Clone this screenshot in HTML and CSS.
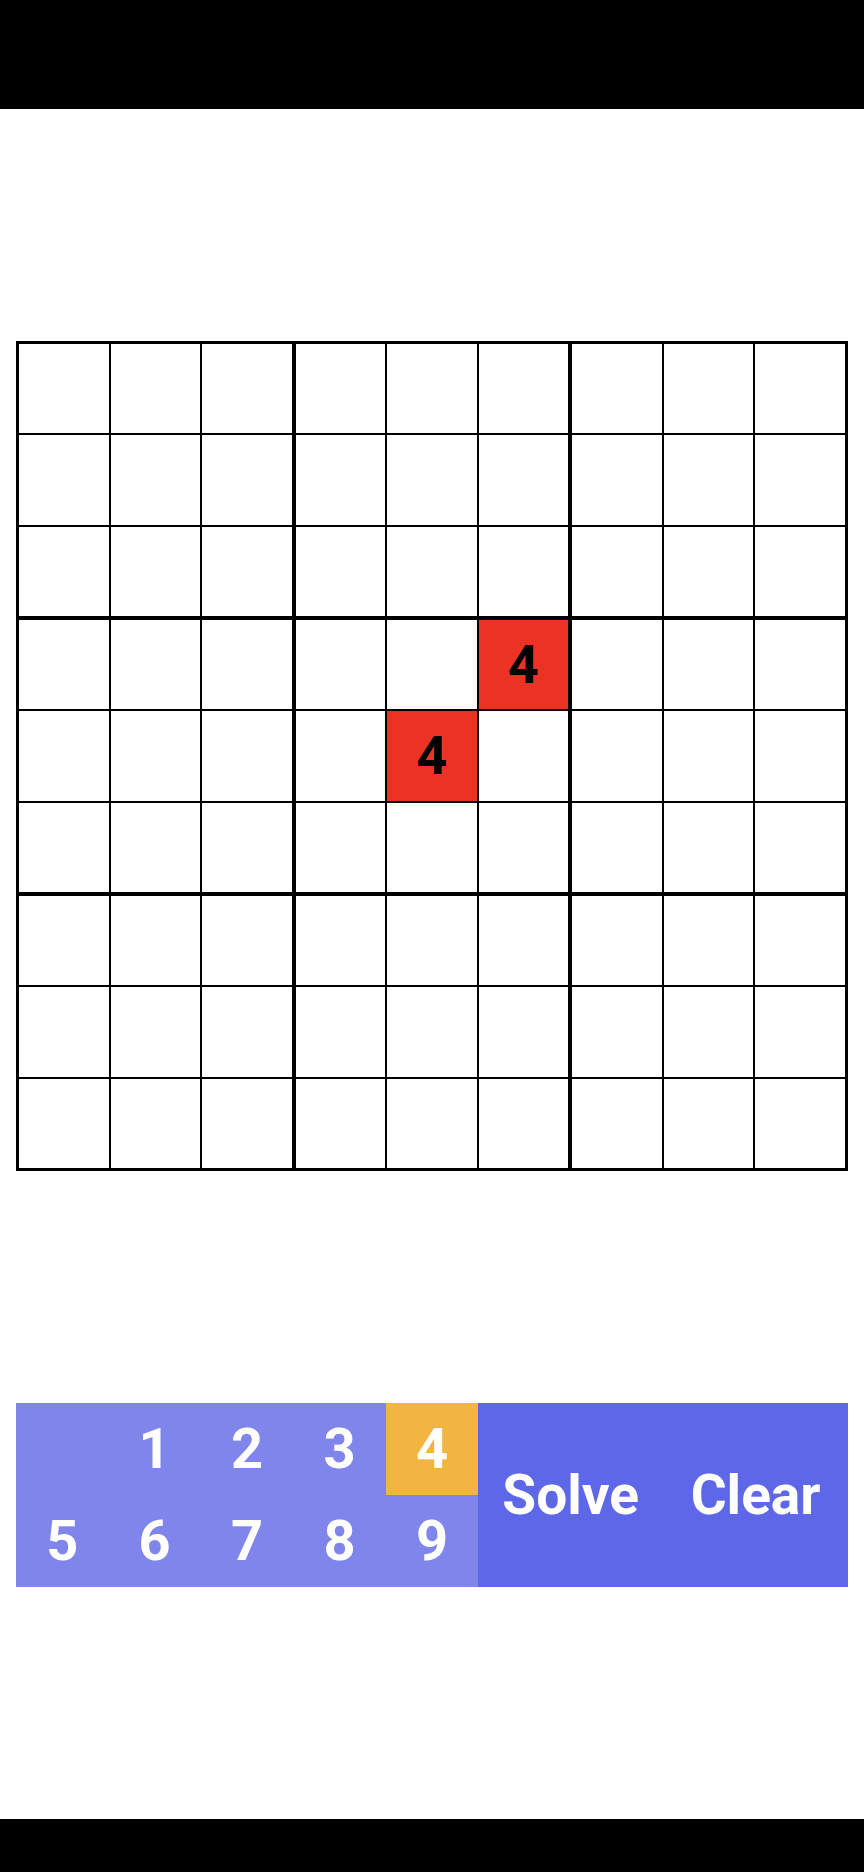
FILE: index.html
```html
<!DOCTYPE html>
<html lang="en-US">
<head>
<meta charset="utf-8">
<title>Sudoku Solver</title>
<link rel="stylesheet" href="styles.css">
</head>
<body>
	<div class="statusbar"></div>

	<div class="main">
		<div class="board">
			<div class="box">
				<div class="cell"></div><div class="cell"></div><div class="cell"></div>
				<div class="cell"></div><div class="cell"></div><div class="cell"></div>
				<div class="cell"></div><div class="cell"></div><div class="cell"></div>
			</div>
			<div class="box">
				<div class="cell"></div><div class="cell"></div><div class="cell"></div>
				<div class="cell"></div><div class="cell"></div><div class="cell"></div>
				<div class="cell"></div><div class="cell"></div><div class="cell"></div>
			</div>
			<div class="box">
				<div class="cell"></div><div class="cell"></div><div class="cell"></div>
				<div class="cell"></div><div class="cell"></div><div class="cell"></div>
				<div class="cell"></div><div class="cell"></div><div class="cell"></div>
			</div>
			<div class="box">
				<div class="cell"></div><div class="cell"></div><div class="cell"></div>
				<div class="cell"></div><div class="cell"></div><div class="cell"></div>
				<div class="cell"></div><div class="cell"></div><div class="cell"></div>
			</div>
			<div class="box">
				<div class="cell"></div><div class="cell"></div><div class="cell conflict">4</div>
				<div class="cell"></div><div class="cell conflict">4</div><div class="cell"></div>
				<div class="cell"></div><div class="cell"></div><div class="cell"></div>
			</div>
			<div class="box">
				<div class="cell"></div><div class="cell"></div><div class="cell"></div>
				<div class="cell"></div><div class="cell"></div><div class="cell"></div>
				<div class="cell"></div><div class="cell"></div><div class="cell"></div>
			</div>
			<div class="box">
				<div class="cell"></div><div class="cell"></div><div class="cell"></div>
				<div class="cell"></div><div class="cell"></div><div class="cell"></div>
				<div class="cell"></div><div class="cell"></div><div class="cell"></div>
			</div>
			<div class="box">
				<div class="cell"></div><div class="cell"></div><div class="cell"></div>
				<div class="cell"></div><div class="cell"></div><div class="cell"></div>
				<div class="cell"></div><div class="cell"></div><div class="cell"></div>
			</div>
			<div class="box">
				<div class="cell"></div><div class="cell"></div><div class="cell"></div>
				<div class="cell"></div><div class="cell"></div><div class="cell"></div>
				<div class="cell"></div><div class="cell"></div><div class="cell"></div>
			</div>
		</div>

		<div class="controls">
			<div class="key"></div>
			<div class="key">1</div>
			<div class="key">2</div>
			<div class="key">3</div>
			<div class="key selected">4</div>
			<div class="action solve">Solve</div>
			<div class="action clear">Clear</div>
			<div class="key">5</div>
			<div class="key">6</div>
			<div class="key">7</div>
			<div class="key">8</div>
			<div class="key">9</div>
		</div>
	</div>

	<div class="navbar"></div>
</body>
</html>
```
FILE: styles.css
```css
body {
    margin: 0;
    height: 1872px;
    display: flex;
    flex-direction: column;
    background-color: white;
    font-family: Roboto, "Liberation Sans", sans-serif;
}
.statusbar {
    height: 109px;
    background-color: black;
}
.navbar {
    height: 53px;
    background-color: black;
}
.main {
    flex: 1;
    display: flex;
    flex-direction: column;
    justify-content: space-evenly;
    padding: 0 16px;
}

/* board */
.board {
    box-sizing: border-box;
    height: 830px;
    display: grid;
    grid-template-columns: repeat(3, 1fr);
    grid-template-rows: repeat(3, 1fr);
    gap: 4px;
    padding: 3px;
    background-color: black;
}
.box {
    display: grid;
    grid-template-columns: repeat(3, 1fr);
    grid-template-rows: repeat(3, 1fr);
    gap: 2px;
}
.cell {
    background-color: white;
    display: flex;
    align-items: center;
    justify-content: center;
    font-size: 54px;
    font-weight: bold;
    color: black;
}
.cell.conflict {
    background-color: #EA3323;
}

/* number pad + buttons */
.controls {
    height: 184px;
    display: grid;
    grid-template-columns: repeat(9, 1fr);
    grid-template-rows: repeat(2, 1fr);
    background-color: #7F85EB;
    color: white;
    font-size: 56px;
    font-weight: bold;
}
.key {
    display: flex;
    align-items: center;
    justify-content: center;
}
.key.selected {
    background-color: #F2B542;
}
.action {
    grid-row: 1 / span 2;
    grid-column: span 2;
    display: flex;
    align-items: center;
    justify-content: center;
    background-color: #5D67E8;
    font-size: 55px;
}
.solve {
    grid-column: 6 / span 2;
}
.clear {
    grid-column: 8 / span 2;
}
```
